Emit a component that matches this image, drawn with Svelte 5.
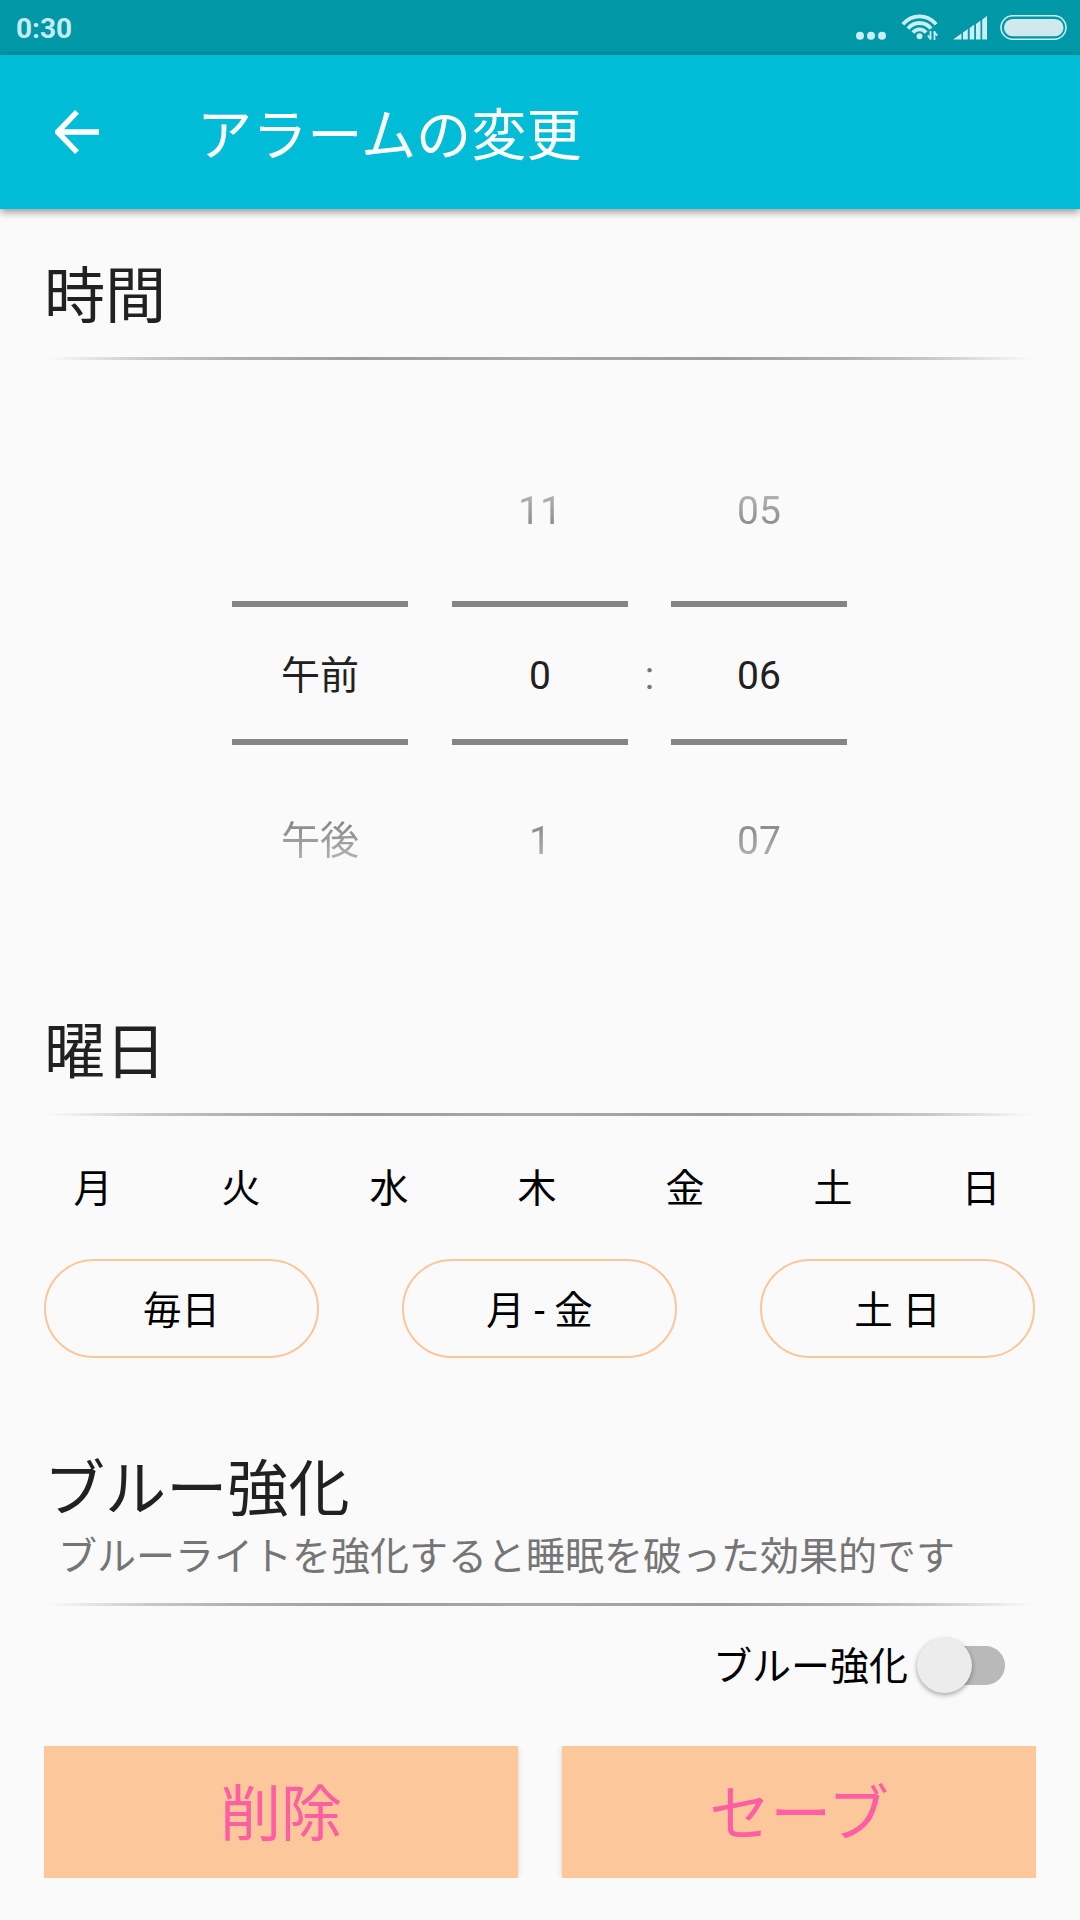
<script lang="ts">
  const pickers = [
    { name: 'ampm', prev: '', current: '午前', next: '午後' },
    { name: 'hour', prev: '11', current: '0', next: '1' },
    { name: 'minute', prev: '05', current: '06', next: '07' }
  ]
  const days = ['月', '火', '水', '木', '金', '土', '日']
  const presets = ['毎日', '月 - 金', '土 日']

  let boost = $state(false)
</script>

<div class="screen">
  <div class="status">
    <span class="clock">0:30</span>
    <svg class="status-icons" width="220" height="55" viewBox="852 0 220 55">
      <g fill="#c9eef3">
        <circle cx="860" cy="35.7" r="4" />
        <circle cx="871" cy="35.7" r="4" />
        <circle cx="882" cy="35.7" r="4" />
        <circle cx="919.5" cy="36.3" r="3" />
        <path d="M953 39.5L961.5 33.5V39.5Z" />
        <path d="M963 32.5L967.8 29V39.5H963Z" />
        <path d="M969.7 28L974.2 24.6V39.5H969.7Z" />
        <path d="M976 24L980.5 20.4V39.5H976Z" />
        <path d="M982.2 19.5L987 16V39.5H982.2Z" />
        <rect x="1004" y="19" width="59.5" height="17.3" rx="8.6" fill="#cfe9ec" />
      </g>
      <g fill="none" stroke="#c9eef3" stroke-width="3.8">
        <path d="M902.8 24.2Q910 16.4 919.5 16.4T936.2 24.2" />
        <path d="M908 28.6Q912.5 23 919.5 23T931 28.6" />
        <path d="M913 32.6Q915.5 29.4 919.5 29.4T926 32.6" />
        <path d="M930.5 31V39.5M934.5 31V40" stroke-width="1.8" />
        <path d="M927.8 35.4L930.8 39.2M934.2 32L937.2 35.6" stroke-width="1.8" />
        <rect x="1001" y="15.8" width="65" height="23.4" rx="11.7" stroke-width="1.6" />
      </g>
    </svg>
  </div>

  <header class="toolbar">
    <svg class="back" width="44" height="44" viewBox="0 0 44 44">
      <path d="M22 1.8L2.5 22L22 42.2M3 22H44" fill="none" stroke="#fff" stroke-width="5.4" />
    </svg>
    <h1>アラームの変更</h1>
  </header>

  <main>
    <section class="time">
      <h2>時間</h2>
      <div class="line"></div>
      <div class="pickers">
        {#each pickers as picker}
          {#if picker.name === 'minute'}
            <span class="colon">:</span>
          {/if}
          <div class="picker {picker.name}">
            <span class="faded prev">{picker.prev}</span>
            <span class="current">{picker.current}</span>
            <span class="faded next">{picker.next}</span>
          </div>
        {/each}
      </div>
    </section>

    <section class="week">
      <h2>曜日</h2>
      <div class="line"></div>
      <div class="days">
        {#each days as day}
          <button class="day">{day}</button>
        {/each}
      </div>
      <div class="presets">
        {#each presets as preset}
          <button class="preset">{preset}</button>
        {/each}
      </div>
    </section>

    <section class="blue">
      <h2>ブルー強化</h2>
      <p>ブルーライトを強化すると睡眠を破った効果的です</p>
      <div class="line"></div>
      <button class="switch-row" class:on={boost} onclick={() => (boost = !boost)}>
        <span class="label">ブルー強化</span>
        <span class="track"><span class="knob"></span></span>
      </button>
    </section>

    <div class="actions">
      <button>削除</button>
      <button>セーブ</button>
    </div>
  </main>
</div>

<style>
  :global(body) {
    background: #fafafa;
  }
  .screen {
    display: flex;
    flex-direction: column;
    width: 1080px;
    height: 1920px;
    overflow: hidden;
    background: #fafafa;
    color: #212121;
    font-family: Roboto, 'Noto Sans CJK JP', sans-serif;
    font-size: 39px;
  }
  button {
    margin: 0;
    padding: 0;
    border: 0;
    background: none;
    color: #000;
    font: inherit;
    cursor: pointer;
  }
  h1,
  h2,
  p {
    margin: 0;
    font-weight: 400;
  }
  .status {
    display: flex;
    justify-content: space-between;
    align-items: center;
    height: 55px;
    padding: 0 8px 0 16px;
    background: #0097a7;
  }
  .clock {
    padding-top: 2px;
    color: #c5ecf3;
    font-size: 28px;
    font-weight: 700;
  }
  .toolbar {
    display: flex;
    align-items: center;
    height: 154px;
    padding-left: 55px;
    background: #00bcd6;
    box-shadow: 0 3px 8px rgba(0, 0, 0, 0.4);
  }
  .toolbar h1 {
    margin-left: 98px;
    padding-top: 8px;
    color: #fff;
    font-size: 55.2px;
    line-height: 80px;
  }
  main {
    padding: 44px 44px 0;
  }
  h2 {
    height: 88px;
    font-size: 61.1px;
    line-height: 88px;
  }
  .line {
    height: 3px;
    margin: 0 4px;
    background: linear-gradient(
      to right,
      transparent,
      #c9c9c9 10%,
      #b0b0b0 19%,
      #9d9d9d 32%,
      #a9a9a9 50%,
      #9d9d9d 68%,
      #b0b0b0 81%,
      #c9c9c9 90%,
      transparent
    );
  }
  .time .line,
  .week .line {
    margin-top: 16px;
  }
  .pickers {
    display: flex;
    height: 476px;
    margin: 75px 0 0 188px;
  }
  .picker {
    display: grid;
    grid-template-rows: 166px 144px 166px;
    width: 176px;
    text-align: center;
  }
  .hour {
    margin-left: 44px;
  }
  .colon {
    width: 43px;
    color: #757575;
    line-height: 482px;
    text-align: center;
  }
  .current {
    box-sizing: border-box;
    border: solid #858585;
    border-width: 6px 0;
    line-height: 138px;
  }
  .faded {
    background-clip: text;
    color: transparent;
  }
  .prev {
    padding-top: 46px;
    line-height: 60px;
    background-image: linear-gradient(#c8c8c8 42px, #808080 100px);
  }
  .next {
    padding-top: 66px;
    line-height: 60px;
    background-image: linear-gradient(#808080 70px, #c8c8c8 134px);
  }
  .week {
    padding-top: 98px;
  }
  .days {
    display: flex;
    gap: 50px;
    margin-top: 24px;
  }
  .day {
    width: 98px;
    height: 98px;
    line-height: 98px;
  }
  .presets {
    display: flex;
    gap: 83px;
    margin-top: 21px;
  }
  .preset {
    width: 275px;
    height: 99px;
    padding-bottom: 4px;
    border: 2px solid #fac69a;
    border-radius: 50px;
    font-size: 38.5px;
  }
  .blue {
    padding-top: 88px;
  }
  .blue h2 {
    height: 82px;
  }
  .blue p {
    padding-left: 14px;
    color: #757575;
    line-height: 58px;
  }
  .blue .line {
    margin-top: 17px;
  }
  .switch-row {
    display: flex;
    align-items: center;
    height: 118px;
    margin-left: auto;
    padding-right: 31px;
  }
  .label {
    padding-bottom: 4px;
  }
  .track {
    display: flex;
    align-items: center;
    width: 80px;
    height: 39px;
    margin-left: 17px;
    border-radius: 20px;
    background: #b9b9b9;
  }
  .knob {
    flex: none;
    width: 55px;
    height: 55px;
    margin-left: -8px;
    border-radius: 50%;
    background: #ececec;
    box-shadow: 0 2px 5px rgba(0, 0, 0, 0.35);
  }
  .on .knob {
    margin-left: 33px;
  }
  .actions {
    display: flex;
    gap: 44px;
    margin-top: 22px;
    overflow: hidden;
  }
  .actions button {
    flex: 1;
    height: 132px;
    padding-bottom: 5px;
    background: #fcc79b;
    box-shadow: 0 0 6px rgba(0, 0, 0, 0.15);
    color: #ff5fa2;
    font-size: 61.1px;
  }
</style>
